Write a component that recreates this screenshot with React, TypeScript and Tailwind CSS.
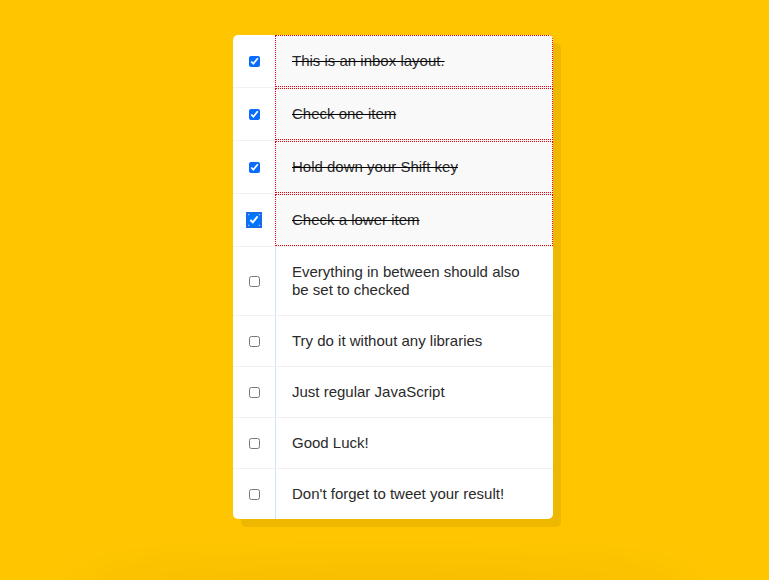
const items = [
  { text: "This is an inbox layout.", checked: true },
  { text: "Check one item", checked: true },
  { text: "Hold down your Shift key", checked: true },
  { text: "Check a lower item", checked: true, focused: true },
  { text: "Everything in between should also be set to checked", checked: false },
  { text: "Try do it without any libraries", checked: false },
  { text: "Just regular JavaScript", checked: false },
  { text: "Good Luck!", checked: false },
  { text: "Don't forget to tweet your result!", checked: false },
];

export default function App() {
  return (
    <div className="relative min-h-[580px] overflow-hidden bg-[#ffc600] pl-[17px] pt-[35px]">
      <div className="mx-auto w-[320px] overflow-hidden rounded-[5px] bg-white shadow-[8px_8px_0_rgba(0,0,0,0.065)]">
        {items.map(({ text, checked, focused }) => (
          <div key={text} className="flex items-center border-b border-[#f1f1f1] last:border-b-0">
            <div className="flex w-[42px] shrink-0 justify-center">
              <input
                type="checkbox"
                defaultChecked={checked}
                className={
                  focused
                    ? "m-0 h-[12px] w-[12px] rounded-[2px] outline outline-2 outline-offset-0 outline-[#1a6be8]"
                    : "m-0 h-[11px] w-[11px] accent-[#0a6cff]"
                }
              />
            </div>
            <p
              className={
                checked
                  ? "m-0 flex-1 border border-dotted border-red-600 bg-[#f9f9f9] px-4 py-4 font-['Helvetica_Neue','Liberation_Sans',sans-serif] text-[15px] font-light leading-[18px] text-[#2a2a2a] line-through decoration-black"
                  : "m-0 flex-1 border-l border-[#d1e2ff] px-4 py-4 font-['Helvetica_Neue','Liberation_Sans',sans-serif] text-[15px] font-light leading-[18px] text-[#2a2a2a]"
              }
            >
              {text}
            </p>
          </div>
        ))}
      </div>
      <div className="pointer-events-none absolute bottom-[-30px] left-[70px] right-[70px] h-[40px] rounded-[50%] bg-black/[0.06] blur-xl" />
    </div>
  );
}
